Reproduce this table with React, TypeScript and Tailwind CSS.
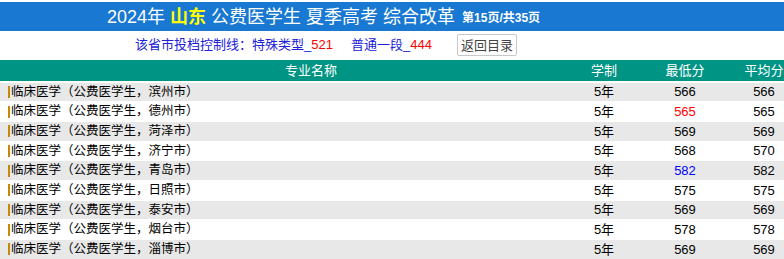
import React from "react";

const rows = [
  { city: "滨州市", min: "566", avg: "566" },
  { city: "德州市", min: "565", avg: "565", minColor: "text-[#ff0000]" },
  { city: "菏泽市", min: "569", avg: "569" },
  { city: "济宁市", min: "568", avg: "570" },
  { city: "青岛市", min: "582", avg: "582", minColor: "text-[#0000ff]" },
  { city: "日照市", min: "575", avg: "575" },
  { city: "泰安市", min: "569", avg: "569" },
  { city: "烟台市", min: "578", avg: "578" },
  { city: "淄博市", min: "569", avg: "569" },
];

const font = "font-['Liberation_Sans','Noto_Sans_CJK_SC',sans-serif]";

export default function App() {
  return (
    <div className={`w-[784px] h-[259px] overflow-hidden bg-white ${font}`}>
      {/* Title */}
      <div className="mt-[2px] h-[29px] bg-[#1878d2] flex items-center pl-[107px] text-white">
        <span className="text-[18px] leading-none">2024年</span>
        <span className="text-[18px] leading-none font-bold text-[#ffff00] mx-[5px]">山东</span>
        <span className="text-[18px] leading-none">公费医学生 夏季高考 综合改革</span>
        <span className="text-[12px] leading-none font-bold ml-[7px] mt-[3px]">第15页/共35页</span>
      </div>

      {/* Control line */}
      <div className="h-[28px] flex items-center pl-[135px] text-[13px]">
        <span className="text-[#2020d8]">该省市投档控制线：特殊类型_</span>
        <span className="text-[#ff0000]">521</span>
        <span className="text-[#2020d8] ml-[18px]">普通一段_</span>
        <span className="text-[#ff0000]">444</span>
        <button className="ml-[25px] h-[22px] px-[3px] border border-[#c8c8c8] rounded-[2px] bg-white text-[#444] text-[13px] leading-none">
          返回目录
        </button>
      </div>

      {/* Header */}
      <div className="mt-[1px] h-[21px] bg-[#009485] flex items-center text-white text-[13px] w-[800px]">
        <div className="w-[566px] pl-[56px] text-center">专业名称</div>
        <div className="w-[76px] text-center">学制</div>
        <div className="w-[86px] text-center">最低分</div>
        <div className="w-[72px] text-center">平均分</div>
      </div>

      {/* Rows */}
      <div className="w-[800px] pt-[0.7px]">
        {rows.map((r, i) => (
          <div key={r.city} className="h-[19.67px] pt-[1px]">
            <div
              className={`h-full flex items-center text-[13px] text-black ${i % 2 === 0 ? "bg-[#e8e8e8]" : "bg-white"}`}
            >
              <div className="w-[566px] pl-[8px] flex items-center">
                <span className="inline-block w-[2px] h-[12px] bg-[#c8860c] mr-[1px]" />
                <span className="text-[12.5px]">临床医学（公费医学生，{r.city}）</span>
              </div>
              <div className="w-[76px] text-center">5年</div>
              <div className={`w-[86px] text-center ${r.minColor ?? ""}`}>{r.min}</div>
              <div className="w-[72px] text-center">{r.avg}</div>
            </div>
          </div>
        ))}
      </div>
    </div>
  );
}
